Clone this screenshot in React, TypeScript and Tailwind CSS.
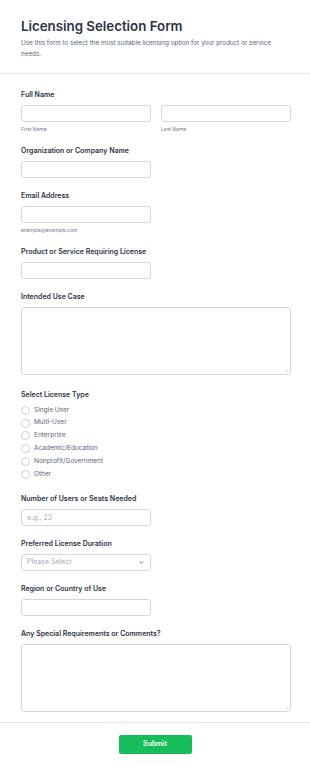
import React from "react";

const font = { fontFamily: "Inter, 'Noto Sans', sans-serif" };

function Label({ children }: { children: React.ReactNode }) {
  return (
    <div className="text-[7px] leading-[10px] font-semibold text-[#2c3345]">{children}</div>
  );
}

function Sub({ children }: { children: React.ReactNode }) {
  return <div className="mt-[3px] text-[5px] leading-[8px] text-[#6f7a90]">{children}</div>;
}

const inputCls =
  "block h-[17px] rounded-[3px] border border-[#d3d7e0] bg-white px-[5px] text-[7px] text-[#2c3345] outline-none placeholder:text-[#a3abbd]";

function TextArea() {
  return (
    <div className="relative mt-[5px]">
      <textarea className={`${inputCls} h-[68px] w-full resize-none`} />
      <svg className="absolute bottom-[2px] right-[2px]" width="5" height="5" viewBox="0 0 5 5">
        <path d="M4.5 1L1 4.5M4.5 3L3 4.5" stroke="#b9bfcb" strokeWidth="0.6" />
      </svg>
    </div>
  );
}

export default function App() {
  const types = [
    "Single User",
    "Multi-User",
    "Enterprise",
    "Academic/Education",
    "Nonprofit/Government",
    "Other",
  ];

  return (
    <div className="min-h-[770px] w-[310px] bg-white" style={font}>
      {/* header */}
      <div className="border-b border-[#e6e8ee] pl-[21px] pr-[19px] pt-[17px] pb-[13px]">
        <h1 className="text-[13.3px] leading-[18px] font-semibold text-[#2c3345]">Licensing Selection Form</h1>
        <p className="mt-[3px] text-[6.3px] leading-[11px] text-[#57647e]">
          Use this form to select the most suitable licensing option for your product or service needs.
        </p>
      </div>

      {/* fields */}
      <div className="flex flex-col gap-[13px] pl-[21px] pr-[19px] pt-[16px] pb-[10px]">
        <div>
          <Label>Full Name</Label>
          <div className="mt-[5px] grid grid-cols-2 gap-[10px]">
            <div>
              <input className={`${inputCls} w-full`} />
              <Sub>First Name</Sub>
            </div>
            <div>
              <input className={`${inputCls} w-full`} />
              <Sub>Last Name</Sub>
            </div>
          </div>
        </div>

        <div>
          <Label>Organization or Company Name</Label>
          <input className={`${inputCls} mt-[5px] w-[130px]`} />
        </div>

        <div>
          <Label>Email Address</Label>
          <input className={`${inputCls} mt-[5px] w-[130px]`} />
          <Sub>example@example.com</Sub>
        </div>

        <div>
          <Label>Product or Service Requiring License</Label>
          <input className={`${inputCls} mt-[5px] w-[130px]`} />
        </div>

        <div>
          <Label>Intended Use Case</Label>
          <TextArea />
        </div>

        <div className="pt-[2px]">
          <Label>Select License Type</Label>
          <div className="mt-[4px] flex flex-col">
            {types.map((t) => (
              <label key={t} className="flex h-[12.8px] items-center gap-[4px]">
                <span className="h-[9px] w-[9px] rounded-full border border-[#c8cdd8] bg-white" />
                <span className="text-[6.5px] text-[#57647e]">{t}</span>
              </label>
            ))}
          </div>
        </div>

        <div>
          <Label>Number of Users or Seats Needed</Label>
          <input placeholder="e.g., 23" className={`${inputCls} mt-[5px] w-[130px]`} />
        </div>

        <div>
          <Label>Preferred License Duration</Label>
          <div className="relative mt-[5px] flex h-[17px] w-[130px] items-center justify-between rounded-[3px] border border-[#d3d7e0] pl-[5px] pr-[6px]">
            <span className="text-[7px] text-[#a3abbd]">Please Select</span>
            <svg width="5" height="3" viewBox="0 0 5 3" fill="none">
              <path d="M0.8 0.6l1.7 1.6 1.7-1.6" stroke="#57647e" strokeWidth="0.9" strokeLinecap="round" strokeLinejoin="round" />
            </svg>
          </div>
        </div>

        <div>
          <Label>Region or Country of Use</Label>
          <input className={`${inputCls} mt-[5px] w-[130px]`} />
        </div>

        <div>
          <Label>Any Special Requirements or Comments?</Label>
          <TextArea />
        </div>
      </div>

      {/* footer */}
      <div className="flex justify-center border-t border-[#e6e8ee] pt-[12px]">
        <button className="h-[19px] w-[73px] rounded-[2px] bg-[#18bd5b] text-[7px] font-semibold text-white">
          Submit
        </button>
      </div>
    </div>
  );
}
